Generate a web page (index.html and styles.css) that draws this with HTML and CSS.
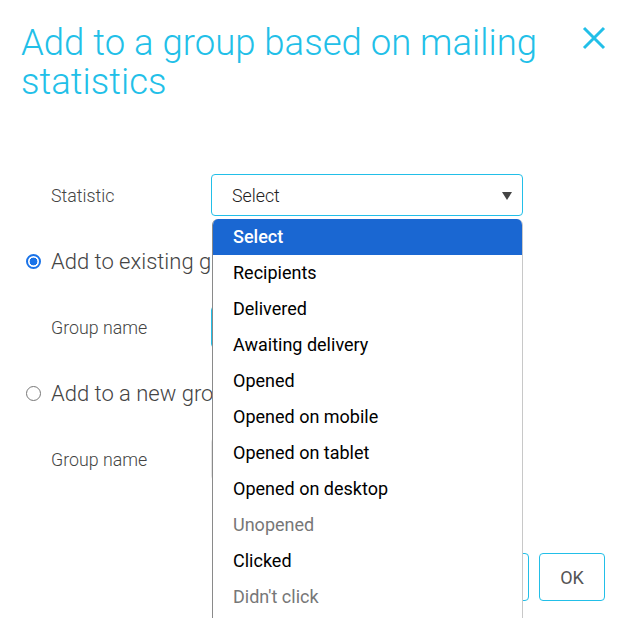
FILE: index.html
```html
<!DOCTYPE html>
<html lang="en">
<head>
<meta charset="utf-8">
<title>Add to a group based on mailing statistics</title>
<link rel="stylesheet" href="styles.css">
</head>
<body>
<div class="dialog">
  <header class="head">
    <h1 class="title">Add to a group based on mailing statistics</h1>
    <button class="close" type="button" aria-label="Close">
      <svg width="24" height="24" viewBox="0 0 24 24"><path d="M2 2 L22 22 M22 2 L2 22" stroke="currentColor" stroke-width="3" fill="none"/></svg>
    </button>
  </header>
  <form class="form">
    <div class="row">
      <span class="label">Statistic</span>
      <div class="select-wrap">
        <div class="select">Select<span class="arrow"></span></div>
        <ul class="dropdown">
          <li class="opt active">Select</li>
          <li class="opt">Recipients</li>
          <li class="opt">Delivered</li>
          <li class="opt">Awaiting delivery</li>
          <li class="opt">Opened</li>
          <li class="opt">Opened on mobile</li>
          <li class="opt">Opened on tablet</li>
          <li class="opt">Opened on desktop</li>
          <li class="opt disabled">Unopened</li>
          <li class="opt">Clicked</li>
          <li class="opt disabled">Didn't click</li>
          <li class="opt">Bounced</li>
        </ul>
      </div>
    </div>
    <label class="radio-row"><span class="radio checked"></span>Add to existing group</label>
    <div class="row">
      <span class="label">Group name</span>
      <div class="input focused"></div>
    </div>
    <label class="radio-row"><span class="radio"></span>Add to a new group</label>
    <div class="row">
      <span class="label">Group name</span>
      <div class="input"></div>
    </div>
    <div class="actions">
      <button class="btn" type="button">Cancel</button>
      <button class="btn" type="button">OK</button>
    </div>
  </form>
</div>
</body>
</html>
```
FILE: styles.css
```css
html, body {
  margin: 0;
  padding: 0;
  overflow: hidden;
  background: #fff;
}
body {
  font-family: Roboto, "Liberation Sans", sans-serif;
  color: #444;
}
.dialog {
  width: 628px;
  height: 618px;
  box-sizing: border-box;
  padding: 23px 22px 0 21px;
}
.head {
  display: flex;
  justify-content: space-between;
  align-items: flex-start;
}
.title {
  margin: 0;
  font-size: 36.5px;
  font-weight: 300;
  line-height: 39px;
  color: #22bfe8;
  width: 545px;
}
.close {
  border: none;
  background: none;
  padding: 0;
  margin: 3px 0 0 0;
  color: #22bfe8;
  width: 24px;
  height: 24px;
  display: flex;
}
.form {
  margin-top: 73px;
  display: flex;
  flex-direction: column;
  gap: 24px;
}
.row {
  display: flex;
  align-items: center;
  height: 42px;
  padding-left: 30px;
}
.label {
  width: 160px;
  font-size: 17.8px;
  font-weight: 300;
  color: #444;
}
.select-wrap {
  position: relative;
  width: 312px;
  height: 42px;
}
.select {
  box-sizing: border-box;
  height: 42px;
  border: 1px solid #22bfe8;
  border-radius: 4px;
  padding: 0 20px;
  display: flex;
  align-items: center;
  font-size: 17.8px;
  font-weight: 300;
  color: #222;
  position: relative;
}
.arrow {
  position: absolute;
  right: 10px;
  top: 17px;
  width: 0;
  height: 0;
  border-left: 5px solid transparent;
  border-right: 5px solid transparent;
  border-top: 8px solid #444;
}
.dropdown {
  position: absolute;
  top: 45px;
  left: 1px;
  width: 311px;
  box-sizing: border-box;
  margin: 0;
  padding: 0;
  list-style: none;
  background: #fff;
  border: 1px solid #c8c8c8;
  border-left-color: #8a8a8a;
  border-top: none;
  border-radius: 6px 6px 0 0;
  overflow: hidden;
  z-index: 5;
}
.opt {
  height: 36px;
  line-height: 36px;
  padding-left: 20px;
  font-size: 18px;
  font-weight: 400;
  color: #000;
}
.opt.active {
  background: #1a67d2;
  color: #fff;
  font-weight: 500;
}
.opt.disabled {
  color: #777;
}
.radio-row {
  display: flex;
  align-items: center;
  height: 42px;
  font-size: 22px;
  font-weight: 300;
  color: #444;
  padding-left: 5px;
}
.radio {
  box-sizing: border-box;
  width: 15px;
  height: 15px;
  border-radius: 50%;
  border: 1.5px solid #777;
  margin-right: 10px;
  flex: none;
}
.radio.checked {
  border: 2px solid #1a73e8;
  background: radial-gradient(circle, #1a73e8 0 3.6px, #fff 4.2px);
}
.input {
  box-sizing: border-box;
  width: 312px;
  height: 42px;
  border: 1px solid #e4e4e4;
  border-radius: 4px;
}
.input.focused {
  border-color: #22bfe8;
}
.actions {
  margin-top: 49px;
  display: flex;
  justify-content: flex-end;
  gap: 10px;
  padding-right: 1px;
}
.btn {
  height: 48px;
  box-sizing: border-box;
  border: 1px solid #22bfe8;
  border-radius: 4px;
  background: #fff;
  font-family: Roboto, "Liberation Sans", sans-serif;
  font-size: 18px;
  color: #555;
  padding: 0 20px;
  min-width: 66px;
}
```
